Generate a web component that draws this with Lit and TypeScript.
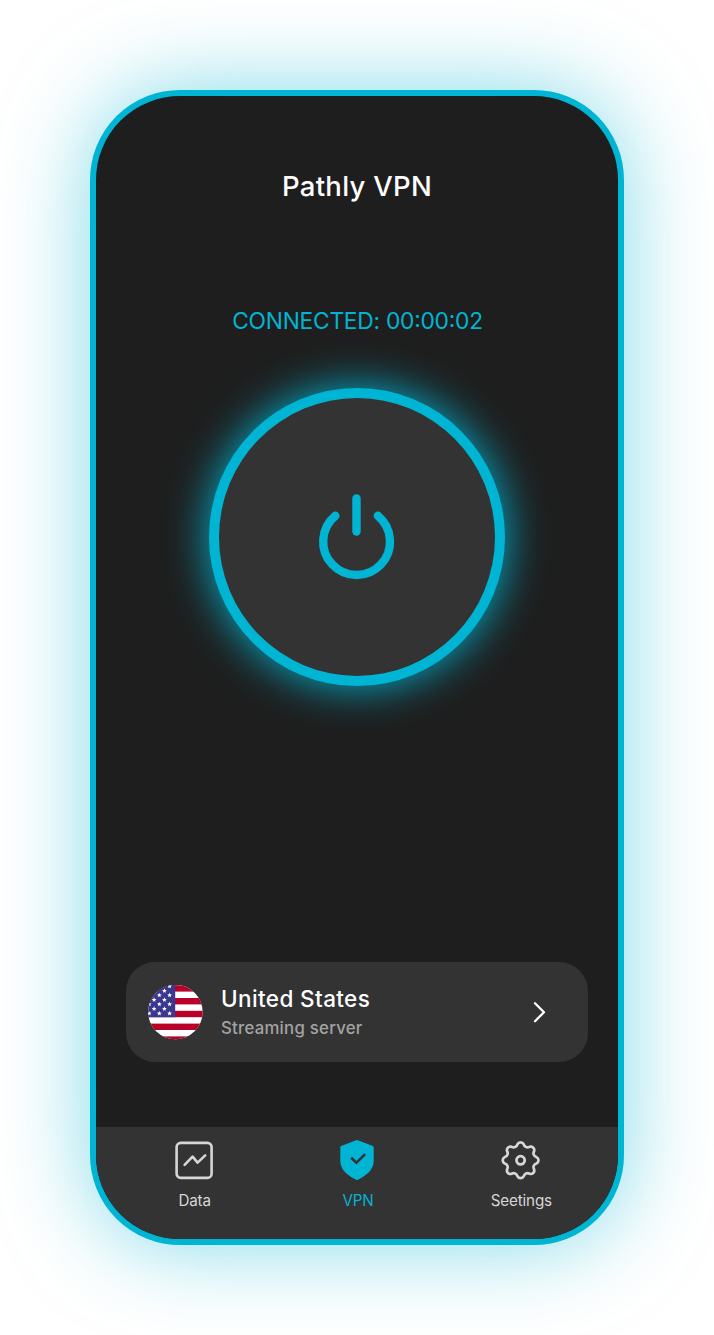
import { LitElement, html, css, svg } from "lit";
import { customElement, property } from "lit/decorators.js";
import { classMap } from "lit/directives/class-map.js";

const CYAN = css`#00b5d4`;

/** Eight-lobed cog outline built from alternating convex and concave arcs. */
function cogPath(cx: number, cy: number, r: number): string {
  const point = (deg: number) => {
    const a = (deg * Math.PI) / 180;
    return `${(cx + r * Math.cos(a)).toFixed(2)} ${(cy + r * Math.sin(a)).toFixed(2)}`;
  };
  let d = `M${point(-11.25)}`;
  for (let i = 0; i < 8; i++) {
    d += `A3.5 3.5 0 0 1 ${point(i * 45 + 11.25)}`;
    d += `A3.9 3.9 0 0 0 ${point(i * 45 + 33.75)}`;
  }
  return d + "Z";
}

function starPoints(cx: number, cy: number, r: number): string {
  return Array.from({ length: 10 }, (_, i) => {
    const a = ((i * 36 - 90) * Math.PI) / 180;
    const k = i % 2 ? r * 0.45 : r;
    return `${(cx + k * Math.cos(a)).toFixed(2)},${(cy + k * Math.sin(a)).toFixed(2)}`;
  }).join(" ");
}

const STARS = [
  [11.3, 1.7], [21.6, 1.7], [16.4, 6.3],
  [11.3, 10.7], [21.6, 10.7],
  [6.1, 15.3], [16.4, 15.3],
  [1.2, 19.7], [11.3, 19.7], [21.6, 19.7],
  [6.1, 24.3], [16.4, 24.3],
  [1.2, 28.9], [11.3, 28.9], [21.6, 28.9],
];

@customElement("us-flag")
class UsFlag extends LitElement {
  static styles = css`
    :host { display: block; width: 55px; height: 55px; }
    svg { display: block; }
  `;
  render() {
    return html`<svg width="55" height="55" viewBox="0 0 55 55">
      <clipPath id="disc"><circle cx="27.4" cy="27" r="27.2" /></clipPath>
      <g clip-path="url(#disc)">
        <rect width="55" height="55" fill="#fff" />
        ${[0.2, 13, 25.8, 38.6, 51.4].map(
          (y) => svg`<rect y=${y} width="55" height="6.4" fill="#ba0029" />`
        )}
        <rect width="27.2" height="32.2" fill="#393790" />
        ${STARS.map(([x, y]) => svg`<polygon points=${starPoints(x, y - 0.5, 2.5)} fill="#fff" />`)}
      </g>
    </svg>`;
  }
}

@customElement("power-button")
class PowerButton extends LitElement {
  static styles = css`
    :host { display: block; }
    .dial {
      box-sizing: border-box;
      width: 296px;
      height: 298px;
      padding: 0;
      border: 10px solid ${CYAN};
      border-radius: 50%;
      background: #333;
      box-shadow: 0 0 44px ${CYAN};
      display: flex;
      align-items: center;
      justify-content: center;
    }
    svg { display: block; }
  `;
  render() {
    return html`<button class="dial" aria-label="Power">
      <svg width="96" height="98" viewBox="0 0 96 98" fill="none" stroke="#00b5d4"
        stroke-width="8.4" stroke-linecap="round">
        <path d="M26.4 27.8A33.4 33.4 0 1 0 68.8 27.8" />
        <path d="M47.5 10.4V43.6" />
      </svg>
    </button>`;
  }
}

@customElement("server-card")
class ServerCard extends LitElement {
  @property() country = "";
  @property() detail = "";
  static styles = css`
    :host { display: block; }
    .card {
      box-sizing: border-box;
      height: 100px;
      padding: 0 37px 0 22px;
      border-radius: 29px;
      background: #333;
      display: flex;
      align-items: center;
    }
    .labels { flex: 1; margin-left: 18px; white-space: nowrap; }
    .country { color: #fff; font-size: 22.5px; line-height: 30px; font-weight: 500; letter-spacing: 0.38px; }
    .detail { color: #a3a3a3; font-size: 16.8px; line-height: 24px; font-weight: 500; letter-spacing: 0.24px; margin-top: 2px; }
    svg { display: block; }
  `;
  render() {
    return html`<div class="card">
      <us-flag></us-flag>
      <div class="labels">
        <div class="country">${this.country}</div>
        <div class="detail">${this.detail}</div>
      </div>
      <svg width="24" height="24" viewBox="0 0 24 24" fill="none" stroke="#fff"
        stroke-width="2.3" stroke-linecap="round" stroke-linejoin="round">
        <path d="M8 3.2L17 12.2L8 21.2" />
      </svg>
    </div>`;
  }
}

const ICONS = {
  data: svg`
    <rect x="2.6" y="2.9" width="35" height="35" rx="4.2" stroke="currentColor" stroke-width="2.6" />
    <path d="M10.6 24.9L18.6 16.6L23.6 22.6L31.2 15.4" stroke="currentColor" stroke-width="2.6"
      stroke-linecap="round" stroke-linejoin="round" />`,
  vpn: svg`
    <path d="M19.2 .3Q20 -.1 20.8 .3L35.8 6Q36.7 6.4 36.7 7.4V21C36.7 30.5 28.5 35.7 20.9 39.8Q20 40.2 19.1 39.8C11.5 35.7 3.3 30.5 3.3 21V7.4Q3.3 6.4 4.2 6Z"
      fill="currentColor" />
    <path d="M15.1 18.7L19.4 22.8L27.2 15" stroke="#333" stroke-width="2.6"
      stroke-linecap="square" stroke-linejoin="miter" />`,
  settings: svg`
    <path d=${cogPath(20.6, 20.3, 16.2)} stroke="currentColor" stroke-width="2.7" stroke-linejoin="round" />
    <circle cx="20.6" cy="20.3" r="4.1" stroke="currentColor" stroke-width="2.8" />`,
};

@customElement("tab-item")
class TabItem extends LitElement {
  @property() icon: keyof typeof ICONS = "data";
  @property() label = "";
  @property({ type: Boolean }) active = false;
  static styles = css`
    :host { display: block; }
    .tab {
      color: #d6d6d6;
      display: flex;
      flex-direction: column;
      align-items: center;
    }
    .tab.active { color: ${CYAN}; }
    svg { display: block; }
    .label { margin-top: 10px; padding-left: 2px; font-size: 15.2px; line-height: 20px; font-weight: 400; letter-spacing: -0.15px; white-space: nowrap; }
  `;
  render() {
    return html`<div class=${classMap({ tab: true, active: this.active })}>
      <svg width="40" height="41" viewBox="0 0 40 41" fill="none">${ICONS[this.icon]}</svg>
      <div class="label">${this.label}</div>
    </div>`;
  }
}

@customElement("app-root")
class AppRoot extends LitElement {
  static styles = css`
    :host {
      display: block;
      box-sizing: border-box;
      width: 714px;
      height: 1335px;
      padding: 90px;
      overflow: hidden;
      background: #fff;
      font-family: Inter, "Liberation Sans", sans-serif;
    }
    .phone {
      box-sizing: border-box;
      height: 1155px;
      border: 6px solid ${CYAN};
      border-radius: 90px;
      background: #1e1e1e;
      box-shadow: 0 0 88px rgba(0, 181, 212, 0.5);
      display: flex;
      flex-direction: column;
      align-items: center;
      overflow: hidden;
    }
    .title {
      margin: 72px 0 0;
      color: #fff;
      font-size: 27.5px;
      line-height: 36px;
      font-weight: 550;
      letter-spacing: 0.28px;
      white-space: nowrap;
    }
    .status {
      margin-top: 102px;
      padding-left: 1px;
      color: ${CYAN};
      font-size: 22.8px;
      line-height: 30px;
      font-weight: 400;
      letter-spacing: -0.26px;
      white-space: nowrap;
    }
    .colon { line-height: 1; vertical-align: 2px; }
    power-button { margin-top: 52px; }
    server-card { width: 462px; margin-top: auto; margin-bottom: 65px; }
    .tabs {
      box-sizing: border-box;
      width: 100%;
      height: 112px;
      padding: 13px 16px 0;
      background: #333;
      display: grid;
      grid-template-columns: repeat(3, 1fr);
      flex: none;
    }
  `;
  render() {
    return html`<main class="phone">
      <h1 class="title">Pathly VPN</h1>
      <div class="status">CONNECTED: 00<span class="colon">:</span>00<span class="colon">:</span>02</div>
      <power-button></power-button>
      <server-card country="United States" detail="Streaming server"></server-card>
      <nav class="tabs">
        <tab-item icon="data" label="Data"></tab-item>
        <tab-item icon="vpn" label="VPN" active></tab-item>
        <tab-item icon="settings" label="Seetings"></tab-item>
      </nav>
    </main>`;
  }
}
